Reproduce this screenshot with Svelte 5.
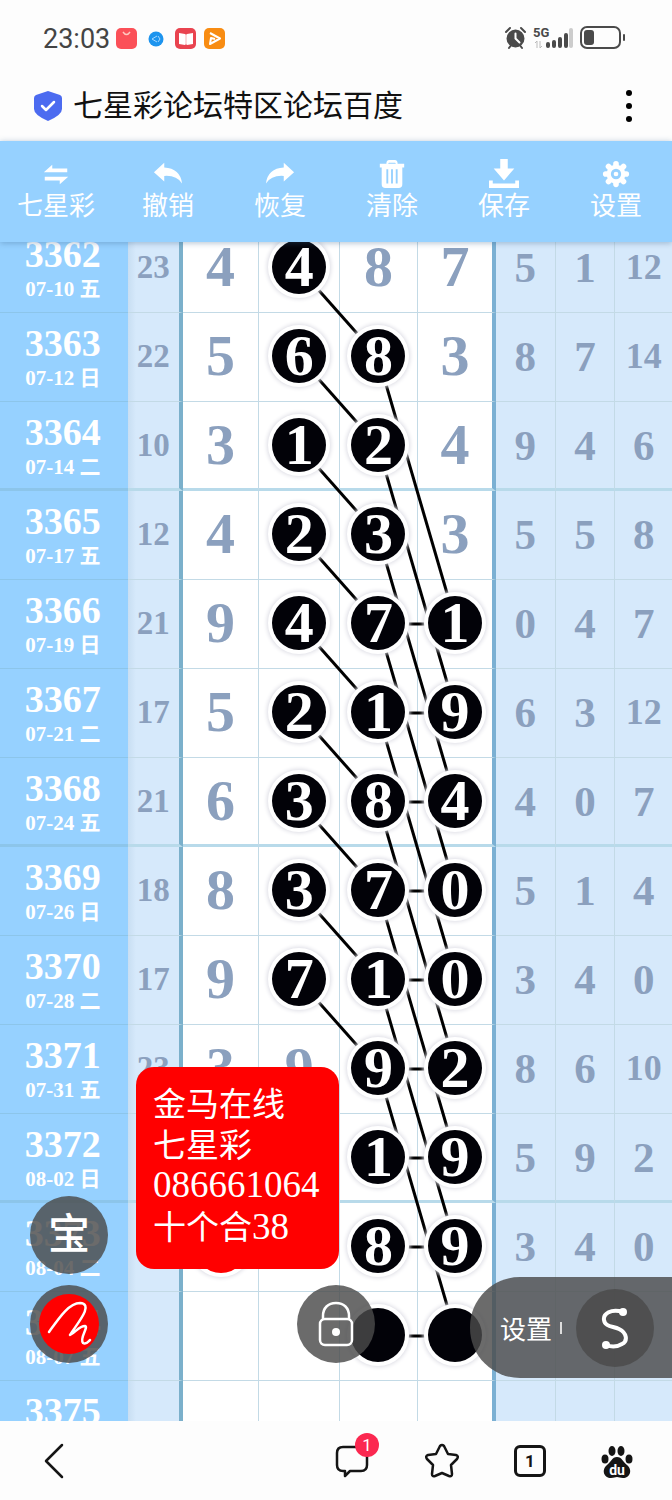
<script>
const rowHeight = 89;
const columnX = [220, 299, 378, 456];

const tools = [
    { id: 'swap', label: '七星彩' },
    { id: 'undo', label: '撤销' },
    { id: 'redo', label: '恢复' },
    { id: 'trash', label: '清除' },
    { id: 'save', label: '保存' },
    { id: 'gear', label: '设置' }
];

// digits: plain string = grey number, b = black ball, r = red ball
const rows = [
    { no: '3362', date: '07-10', day: '五', sum: '23', digits: ['4', 'b4', '8', '7'], extra: ['5', '1', '12'] },
    { no: '3363', date: '07-12', day: '日', sum: '22', digits: ['5', 'b6', 'b8', '3'], extra: ['8', '7', '14'] },
    { no: '3364', date: '07-14', day: '二', sum: '10', digits: ['3', 'b1', 'b2', '4'], extra: ['9', '4', '6'] },
    { no: '3365', date: '07-17', day: '五', sum: '12', digits: ['4', 'b2', 'b3', '3'], extra: ['5', '5', '8'] },
    { no: '3366', date: '07-19', day: '日', sum: '21', digits: ['9', 'b4', 'b7', 'b1'], extra: ['0', '4', '7'] },
    { no: '3367', date: '07-21', day: '二', sum: '17', digits: ['5', 'b2', 'b1', 'b9'], extra: ['6', '3', '12'] },
    { no: '3368', date: '07-24', day: '五', sum: '21', digits: ['6', 'b3', 'b8', 'b4'], extra: ['4', '0', '7'] },
    { no: '3369', date: '07-26', day: '日', sum: '18', digits: ['8', 'b3', 'b7', 'b0'], extra: ['5', '1', '4'] },
    { no: '3370', date: '07-28', day: '二', sum: '17', digits: ['9', 'b7', 'b1', 'b0'], extra: ['3', '4', '0'] },
    { no: '3371', date: '07-31', day: '五', sum: '23', digits: ['3', '9', 'b9', 'b2'], extra: ['8', '6', '10'] },
    { no: '3372', date: '08-02', day: '日', sum: '', digits: ['', '', 'b1', 'b9'], extra: ['5', '9', '2'] },
    { no: '3373', date: '08-04', day: '二', sum: '', digits: ['r', '', 'b8', 'b9'], extra: ['3', '4', '0'] },
    { no: '3374', date: '08-07', day: '五', sum: '', digits: ['', '', 'b', 'b'], extra: ['', '', ''] },
    { no: '3375', date: '08-09', day: '日', sum: '', digits: ['', '', '', ''], extra: ['', '', ''] }
];

function link(fromCol, fromRow, toCol, toRow) {
    return {
        x1: columnX[fromCol],
        y1: fromRow * rowHeight + 44,
        x2: columnX[toCol],
        y2: toRow * rowHeight + 44
    };
}

const links = [];
for (let i = 0; i <= 8; i++) links.push(link(1, i, 2, i + 1));
for (let i = 1; i <= 9; i++) links.push(link(2, i, 3, i + 3));
for (let i = 4; i <= 12; i++) links.push(link(2, i, 3, i));

let locked = $state(true);
</script>

<div class="app">
    <div class="status">
        <span class="time">23:03</span>
        <svg class="apps" width="110" height="22" viewBox="0 0 110 22">
            <rect x="0" y="0" width="21" height="21" rx="5" fill="#fb5058" />
            <path d="M7 4q3.500 5 7 0" fill="none" stroke="#ffc9c0" stroke-width="1.500" />
            <circle cx="40" cy="11" r="7.500" fill="#1d94ee" />
            <path d="M36 11l5-3M36 11l5 3M42 8l2 3-2 3" fill="none" stroke="#a5d8ff" />
            <rect x="59" y="0" width="21" height="21" rx="5" fill="#e9434f" />
            <path d="M63 5l6 1 1 1 1-1 6-1v11l-6 1-1-1-1 1-6-1z" fill="#fff" />
            <path d="M70 6v10" stroke="#f7b3b6" />
            <rect x="88" y="0" width="21" height="21" rx="5" fill="#f88c12" />
            <path d="M94 5l10 5.500-10 5.500 1-6 4 1" fill="none" stroke="#fff" stroke-width="2" stroke-linejoin="round" />
        </svg>
        <svg class="signals" width="122" height="26" viewBox="0 0 122 26">
            <g stroke="#4a4a4a" fill="none" stroke-width="2" stroke-linecap="round">
                <path d="M2 6l4-4M21 6l-4-4M5 22l3-4M18 22l-3-4" />
                <circle cx="11.500" cy="12.500" r="8" fill="#4a4a4a" />
                <path d="M11.500 7.500v5l4 4" stroke="#fff" />
            </g>
            <text x="29" y="11" font-size="13" font-weight="700" fill="#4a4a4a">5G</text>
            <path d="M33 22v-7l-2 2M36 15v7l2-2" fill="none" stroke="#bbb" />
            <g stroke-width="4" stroke-linecap="round" stroke="#4a4a4a">
                <path d="M44 18v2M50 16v4M56 13v7M62 9v11" />
                <path d="M67 4v16" stroke="#ccc" />
            </g>
            <rect x="77" y="1" width="39" height="21" rx="6" fill="none" stroke="#4a4a4a" stroke-width="2" />
            <rect x="80" y="4" width="10" height="15" rx="3" fill="#4a4a4a" />
            <path d="M120 9v5" stroke="#4a4a4a" stroke-width="2" stroke-linecap="round" />
        </svg>
    </div>

    <header class="title">
        <svg width="30" height="32" viewBox="0 0 30 32">
            <path d="M15 1l12 4q2 1 2 3v11q0 6-14 12Q1 25 1 19V8q0-2 2-3z" fill="#4c6bf0" />
            <path d="M9 16l4 4 8-8" fill="none" stroke="#fff" stroke-width="2.500" stroke-linecap="round" stroke-linejoin="round" />
        </svg>
        <h1>七星彩论坛特区论坛百度</h1>
        <button class="more" aria-label="更多">
            <svg width="8" height="34" viewBox="0 0 8 34">
                <circle cx="4" cy="4" r="3" /><circle cx="4" cy="17" r="3" /><circle cx="4" cy="30" r="3" />
            </svg>
        </button>
    </header>

    <nav class="tools">
        {#each tools as tool}
            <button>
                <svg width="32" height="32" viewBox="0 0 32 32" fill="#fff">
                    {#if tool.id === 'swap'}
                        <path d="M3 14l9-8v4h16v4zM29 19l-9 8v-4H4v-4z" />
                    {:else if tool.id === 'undo'}
                        <path d="M1 14L12 4v5q17 1 19 17-6-9-19-8v6z" />
                    {:else if tool.id === 'redo'}
                        <path d="M31 14L20 4v5Q3 10 1 26q6-9 19-8v6z" />
                    {:else if tool.id === 'trash'}
                        <path d="M3 5h7q0-4 3-4h6q3 0 3 4h7v4h-2v18q0 4-4 4H9q-4 0-4-4V9H3zM12 5h8q0-1-1-1h-6q-1 0-1 1z" fill-rule="evenodd" />
                        <path d="M11 11v15M16 11v15M21 11v15" stroke="#96d1ff" stroke-width="2" />
                    {:else if tool.id === 'save'}
                        <path d="M12 0h8v10h7L16 23 5 10h7zM0 23h4v3h24v-3h4v8H0z" />
                    {:else}
                        <g stroke="#fff" stroke-width="6" stroke-linecap="round">
                            <path d="M16 5v22M5 16h22M8 8l16 16M24 8L8 24" />
                        </g>
                        <circle cx="16" cy="16" r="10" />
                        <circle cx="16" cy="16" r="4" stroke="#96d1ff" stroke-width="3" />
                    {/if}
                </svg>
                <span>{tool.label}</span>
            </button>
        {/each}
    </nav>

    <main class="chart">
        <div class="sheet">
            <table>
                <colgroup>
                    <col class="c-date" /><col class="c-sum" />
                    <col class="c-one" /><col class="c-two" /><col class="c-three" /><col class="c-four" />
                    <col class="c-extra" /><col class="c-extra" /><col class="c-last" />
                </colgroup>
                <tbody>
                    {#each rows as row, i}
                        <tr class:group={i % 4 === 2}>
                            <th scope="row">
                                <span class="issue">{row.no}</span>
                                <span class="date">{row.date} {row.day}</span>
                            </th>
                            <td class="sum">{row.sum}</td>
                            {#each row.digits as digit}
                                <td class="digit">
                                    {#if digit.startsWith('b')}
                                        <span class="ball">{digit.slice(1)}</span>
                                    {:else if digit.startsWith('r')}
                                        <span class="ball red"></span>
                                    {:else}
                                        {digit}
                                    {/if}
                                </td>
                            {/each}
                            {#each row.extra as value}
                                <td class="extra" class:small={value.length > 1}>{value}</td>
                            {/each}
                        </tr>
                    {/each}
                </tbody>
            </table>
            <svg class="links" viewBox="0 0 672 1246" preserveAspectRatio="none">
                {#each links as l}
                    <line x1={l.x1} y1={l.y1} x2={l.x2} y2={l.y2} />
                {/each}
            </svg>
            <div class="note">
                <p>金马在线</p>
                <p>七星彩</p>
                <p class="num">086661064</p>
                <p>十个合<span class="num">38</span></p>
            </div>
        </div>

        <button class="round treasure">宝</button>
        <button class="round pen" aria-label="画笔">
            <svg width="60" height="60" viewBox="0 0 60 60">
                <circle cx="30" cy="30" r="30" fill="#f00" />
                <path d="M10 38C20 24 30 9 41 9c15 1-4 22-10 32 6-3 9-9 15-9 4 1-6 12-2 17 3 2 5-1 7-3" fill="none" stroke="#fff" stroke-width="2.500" stroke-linecap="round" stroke-linejoin="round" />
            </svg>
        </button>
        <button class="round lock" aria-label="锁定" aria-pressed={locked} onclick={() => (locked = !locked)}>
            <svg width="36" height="46" viewBox="0 0 36 46" fill="none" stroke="#fff" stroke-width="2.500">
                <rect x="2" y="18" width="32" height="26" rx="5" />
                <path d="M5 18v-3C5 7 10 2 18 2s13 5 13 13v3" />
                <circle cx="18" cy="31" r="4" fill="#fff" stroke="none" />
            </svg>
        </button>
        <div class="drawer">
            <button class="setting">设置</button>
            <span class="tick"></span>
            <button class="round curve" aria-label="连线">
                <svg width="30" height="44" viewBox="0 0 30 44">
                    <path d="M23 6C11 2 3 8 4 14c1 7 9 6 15 9 8 4 9 12 3 15-5 3-11 3-16 1" fill="none" stroke="#fff" stroke-width="4" />
                    <circle cx="23" cy="6" r="4" fill="#fff" /><circle cx="6" cy="39" r="4" fill="#fff" />
                </svg>
            </button>
        </div>
    </main>

    <footer class="bottom">
        <button class="back" aria-label="返回">
            <svg width="20" height="36" viewBox="0 0 20 36"><path d="M18 2L2 18l16 16" /></svg>
        </button>
        <button aria-label="评论">
            <svg width="36" height="36" viewBox="0 0 36 36"><path d="M9 4h18q6 0 6 6v12q0 6-6 6H16l-5 5v-5H9q-6 0-6-6V10q0-6 6-6z" /></svg>
            <span class="badge">1</span>
        </button>
        <button aria-label="收藏">
            <svg width="36" height="36" viewBox="0 0 36 36"><path d="M16 3q2-2 4 0l4 8 8 1q3 1 1 4l-6 6 1 9q0 3-3 2l-7-3-7 3q-3 1-3-2l1-9-6-6q-2-3 1-4l8-1z" /></svg>
        </button>
        <button aria-label="窗口">
            <span class="tabs">1</span>
        </button>
        <button aria-label="百度">
            <svg class="paw" width="34" height="36" viewBox="0 0 34 36">
                <ellipse cx="5" cy="16" rx="3.500" ry="4.500" /><ellipse cx="12" cy="8" rx="3.500" ry="5" />
                <ellipse cx="21" cy="8" rx="3.500" ry="5" /><ellipse cx="29" cy="16" rx="3.500" ry="4.500" />
                <path d="M17 14c5 0 6 5 10 8 6 5 3 13-4 13-3 0-4-1-6-1s-3 1-6 1c-7 0-10-8-4-13 4-3 5-8 10-8z" />
                <text x="17" y="32" text-anchor="middle" font-size="14" font-weight="700">du</text>
            </svg>
        </button>
    </footer>
</div>

<style>
    :global(body) {
        background: #fdfdfd;
        font-family: "Roboto", "Noto Sans CJK SC", sans-serif;
    }
    .app {
        display: flex;
        flex-direction: column;
        height: 100vh;
        min-height: 800px;
    }
    button {
        padding: 0;
        border: none;
        background: none;
        font-family: inherit;
        color: inherit;
        cursor: pointer;
    }
    svg {
        display: block;
    }

    .status {
        display: flex;
        align-items: center;
        height: 70px;
        padding: 8px 46px 0 43px;
        box-sizing: border-box;
    }
    .time {
        font-size: 27px;
        color: #444;
    }
    .apps {
        margin-left: 6px;
    }
    .signals {
        margin-left: auto;
    }

    .title {
        display: flex;
        align-items: center;
        height: 71px;
        padding: 0 39px 0 33px;
    }
    .title h1 {
        flex: 1;
        margin: 0 0 0 10px;
        font-size: 30px;
        line-height: 40px;
        font-weight: 400;
        color: #111;
    }

    .tools {
        display: flex;
        flex-shrink: 0;
        height: 101px;
        background: #96d1ff;
        box-shadow: 0 1px 6px rgba(60, 100, 140, 0.4);
        position: relative;
        z-index: 5;
    }
    .tools button {
        flex: 1;
        display: flex;
        flex-direction: column;
        align-items: center;
        padding-top: 18px;
        color: #fff;
        font-size: 26px;
        line-height: 34px;
    }
    .tools svg {
        width: 30px;
        height: 30px;
    }

    .chart {
        position: relative;
        flex: 1;
        min-height: 0;
        overflow: hidden;
    }
    .sheet {
        position: relative;
        margin-top: -18px;
    }
    table {
        width: 100%;
        table-layout: fixed;
        border-collapse: separate;
        border-spacing: 0;
        font-family: "Liberation Serif", "Noto Sans CJK SC", serif;
        font-weight: 700;
    }
    .c-date { width: 19%; }
    .c-sum { width: 8.2%; }
    .c-one { width: 11.4%; }
    .c-two { width: 12%; }
    .c-three { width: 11.6%; }
    .c-four { width: 11.6%; }
    .c-extra { width: 8.9%; }
    .c-last { width: 8.4%; }

    th, td {
        box-sizing: border-box;
        height: 89px;
        padding: 0 0 2px;
        border-bottom: 1px solid #c3dae6;
        border-right: 1px solid #c3dae6;
        text-align: center;
        vertical-align: middle;
        color: #8ba0be;
    }
    .group th, .group td {
        padding-bottom: 0;
        border-bottom: 3px solid #b8daea;
    }
    th {
        padding: 3px 2px 0 0;
        background: #96d1ff;
        border-color: #8cc5ea;
        border-right: none;
        color: #fff;
    }
    .group th {
        padding-top: 5px;
        border-bottom-color: #8cc5ea;
    }
    th span {
        display: block;
    }
    .issue {
        font-size: 38px;
        line-height: 38px;
    }
    .date {
        font-size: 21px;
        line-height: 32px;
    }
    .sum {
        background: linear-gradient(90deg, #c8def2, #d6e9fb 8px);
        border-right: 4px solid #7bb0cb;
        font-size: 33px;
    }
    .digit {
        background: #fff;
        font-size: 58px;
        line-height: 58px;
    }
    .digit:nth-child(6) {
        border-right: 4px solid #7bb0d3;
    }
    .extra {
        background: #d6e9fb;
        font-size: 43px;
    }
    .extra.small {
        font-size: 36px;
    }
    .extra:last-child {
        border-right: none;
    }
    .ball {
        position: relative;
        z-index: 2;
        display: block;
        width: 54px;
        height: 54px;
        margin: 0 auto;
        border-radius: 50%;
        background: #020208;
        box-shadow: 0 0 0 4px #fff, 0 0 4px 5px #dcdce4;
        color: #fff;
        line-height: 54px;
    }
    .red {
        background: #f00;
    }
    .links {
        position: absolute;
        inset: 0;
        width: 100%;
        height: 100%;
        z-index: 1;
        pointer-events: none;
    }
    .links line {
        stroke: #000;
        stroke-width: 3;
        vector-effect: non-scaling-stroke;
    }

    .note {
        position: absolute;
        left: 136px;
        top: 843px;
        z-index: 3;
        box-sizing: border-box;
        min-width: 203px;
        padding: 15px 17px 23px;
        border-radius: 18px;
        background: #f00;
        color: #fff;
        font-family: "Noto Sans CJK SC", sans-serif;
        font-size: 33px;
        line-height: 41px;
    }
    .note p {
        margin: 0;
        height: 41px;
    }
    .note .num {
        font-family: "Liberation Serif", serif;
        font-size: 37px;
    }

    .round {
        display: grid;
        place-items: center;
        width: 78px;
        height: 78px;
        border-radius: 50%;
        background: rgba(75, 75, 75, 0.82);
        color: #fff;
    }
    .treasure, .pen, .lock {
        position: absolute;
        z-index: 4;
    }
    .treasure {
        left: 30px;
        bottom: 147px;
        font-size: 42px;
        line-height: 42px;
        font-weight: 500;
    }
    .pen {
        left: 30px;
        bottom: 58px;
    }
    .lock {
        left: 50%;
        margin-left: -39px;
        bottom: 58px;
    }
    .drawer {
        position: absolute;
        z-index: 4;
        right: 0;
        bottom: 43px;
        display: flex;
        align-items: center;
        height: 101px;
        padding: 0 18px 0 30px;
        border-radius: 50px 0 0 50px;
        background: rgba(75, 75, 75, 0.82);
        color: #fff;
    }
    .setting {
        font-size: 26px;
    }
    .tick {
        width: 2px;
        height: 12px;
        margin: 0 14px 0 8px;
        background: #ddd;
    }

    .bottom {
        display: flex;
        flex-shrink: 0;
        align-items: center;
        gap: 54px;
        height: 79px;
        padding: 0 38px 0 44px;
        background: #fdfdfd;
    }
    .bottom button {
        position: relative;
    }
    .bottom .back {
        margin-right: auto;
    }
    .bottom svg {
        fill: none;
        stroke: #151515;
        stroke-width: 2.5;
        stroke-linecap: round;
        stroke-linejoin: round;
    }
    .bottom .paw {
        fill: #151515;
        stroke: none;
    }
    .paw text {
        fill: #fff;
    }
    .badge {
        position: absolute;
        top: -10px;
        right: -9px;
        width: 24px;
        height: 24px;
        border-radius: 50%;
        background: #fb2850;
        color: #fff;
        font-size: 17px;
        line-height: 24px;
    }
    .tabs {
        display: block;
        width: 26px;
        height: 26px;
        border: 3px solid #151515;
        border-radius: 6px;
        font-size: 17px;
        line-height: 26px;
        font-weight: 700;
        color: #151515;
    }
</style>
